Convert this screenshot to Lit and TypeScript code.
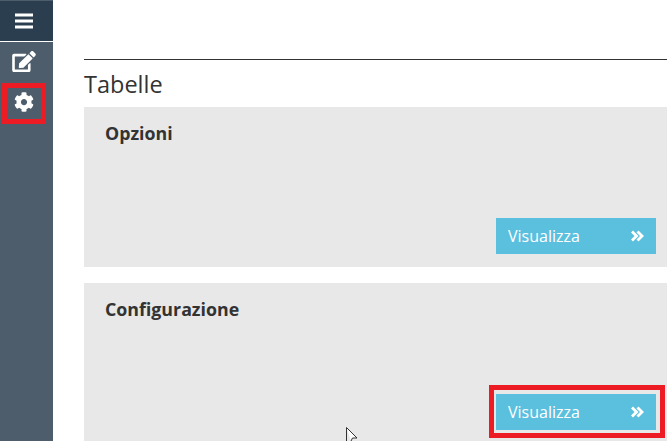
import { LitElement, html, css } from "lit";
import { customElement } from "lit/decorators.js";

const chevrons = html`<svg class="chev" viewBox="0 0 14 12" width="14" height="12" aria-hidden="true"><path d="M2 1.5 6.5 6 2 10.5M7.5 1.5 12 6 7.5 10.5" fill="none" stroke="#fff" stroke-width="2.8"/></svg>`;

@customElement("app-root")
export class AppRoot extends LitElement {
  static styles = css`
    :host {
      display: block;
      position: relative;
      width: 668px;
      height: 441px;
      overflow: hidden;
      background: #fff;
      font-family: "Open Sans", sans-serif;
      color: #333;
    }
    .page { display: flex; height: 441px; }
    .side {
      width: 53px;
      flex: none;
      background: #4e5d6c;
      display: flex;
      flex-direction: column;
      align-items: stretch;
    }
    .burger {
      height: 40px;
      margin-top: 1px;
      background: #2b3e50;
      border-bottom: 1px solid #fff;
      display: flex;
      align-items: center;
      justify-content: center;
      padding-right: 6px;
    }
    .burger svg { display: block; }
    .nav { height: 40px; display: flex; align-items: center; justify-content: center; padding-right: 6px; }
    .nav svg { display: block; }
    .nav.edit { padding-bottom: 2px; box-sizing: border-box; }
    .main { flex: 1; padding: 59px 1px 0 31px; min-width: 0; }
    hr { margin: 0; border: 0; border-top: 1px solid #333; }
    h2 {
      margin: 0;
      height: 47px;
      font-size: 23.5px;
      font-weight: 400;
      line-height: 48px;
    }
    .card {
      background: #e8e8e8;
      height: 160px;
      margin-bottom: 16px;
      padding: 14px 11px 13px 21px;
      box-sizing: border-box;
      display: flex;
      flex-direction: column;
      justify-content: space-between;
    }
    .card h3 { margin: 0; font-size: 17.8px; font-weight: 700; line-height: 25px; }
    .btn {
      align-self: flex-end;
      width: 160px;
      height: 36px;
      box-sizing: border-box;
      padding: 0 12px;
      background: #5bc0de;
      color: #fff;
      font-size: 16px;
      display: flex;
      align-items: center;
      justify-content: space-between;
    }
    .chev { display: block; }
    .mark { position: absolute; border: 5px solid #ed1c24; box-sizing: border-box; pointer-events: none; }
    .m1 { left: 2px; top: 83px; width: 44px; height: 41px; }
    .m2 { left: 489px; top: 385px; width: 176px; height: 53px; }
    .cursor { position: absolute; left: 345px; top: 427px; display: block; }
  `;

  render() {
    return html`
      <div class="page">
        <aside class="side">
          <div class="burger">
            <svg width="18" height="16" viewBox="0 0 18 16" aria-hidden="true"><path d="M0 2h18M0 8h18M0 14h18" stroke="#fff" stroke-width="3"/></svg>
          </div>
          <div class="nav edit">
            <svg width="24" height="21" viewBox="0 0 576 512" aria-hidden="true"><path fill="#fff" d="M402.6 83.2l90.2 90.2c3.8 3.8 3.8 10 0 13.8L274.4 405.6l-92.8 10.3c-12.4 1.4-22.9-9.1-21.5-21.5l10.3-92.8L388.8 83.2c3.8-3.8 10-3.8 13.8 0zm162-22.9l-48.8-48.8c-15.2-15.2-39.9-15.2-55.2 0l-35.4 35.4c-3.8 3.8-3.8 10 0 13.8l90.2 90.2c3.8 3.8 10 3.8 13.8 0l35.4-35.4c15.2-15.3 15.2-40 0-55.2zM384 346.2V454H64V134h229.8c3.2 0 6.2-1.3 8.5-3.5l40-40c7.6-7.6 2.2-20.5-8.5-20.5H48C21.5 70 0 91.5 0 118v352c0 26.5 21.5 48 48 48h352c26.5 0 48-21.5 48-48V306.2c0-10.7-12.9-16-20.5-8.5l-40 40c-2.2 2.3-3.5 5.3-3.5 8.5z"/></svg>
          </div>
          <div class="nav">
            <svg width="20" height="20" viewBox="0 0 512 512" aria-hidden="true"><path fill="#fff" d="M487.4 315.7l-42.6-24.6c4.3-23.2 4.3-47 0-70.2l42.6-24.6c4.9-2.8 7.1-8.6 5.5-14-11.1-35.6-30-67.8-54.7-94.6-3.8-4.1-10-5.1-14.8-2.3L380.8 110c-17.9-15.4-38.5-27.3-60.8-35.1V25.8c0-5.6-3.9-10.5-9.4-11.7-36.7-8.2-74.3-7.8-109.2 0-5.5 1.2-9.4 6.1-9.4 11.7V75c-22.2 7.9-42.8 19.8-60.8 35.1L88.7 85.5c-4.9-2.8-11-1.9-14.8 2.3-24.7 26.7-43.6 58.9-54.7 94.6-1.7 5.4.6 11.2 5.5 14L67.3 221c-4.3 23.2-4.3 47 0 70.2l-42.6 24.6c-4.9 2.8-7.1 8.6-5.5 14 11.1 35.6 30 67.8 54.7 94.6 3.8 4.1 10 5.1 14.8 2.3l42.6-24.6c17.9 15.4 38.5 27.3 60.8 35.1v49.2c0 5.6 3.9 10.5 9.4 11.7 36.7 8.2 74.3 7.8 109.2 0 5.5-1.2 9.4-6.1 9.4-11.7v-49.2c22.2-7.9 42.8-19.8 60.8-35.1l42.6 24.6c4.9 2.8 11 1.9 14.8-2.3 24.7-26.7 43.6-58.9 54.7-94.6 1.5-5.5-.7-11.3-5.6-14.1zM256 336c-44.1 0-80-35.9-80-80s35.9-80 80-80 80 35.9 80 80-35.9 80-80 80z"/></svg>
          </div>
        </aside>
        <main class="main">
          <hr />
          <h2>Tabelle</h2>
          <section class="card">
            <h3>Opzioni</h3>
            <div class="btn"><span>Visualizza</span>${chevrons}</div>
          </section>
          <section class="card">
            <h3>Configurazione</h3>
            <div class="btn"><span>Visualizza</span>${chevrons}</div>
          </section>
        </main>
      </div>
      <div class="mark m1"></div>
      <div class="mark m2"></div>
      <svg class="cursor" width="14" height="14" viewBox="0 0 14 14" aria-hidden="true"><path d="M1.5 .5V14M1.5 .5 12 11H7.5L6 14" fill="#fff" stroke="#333" stroke-width="1"/></svg>
    `;
  }
}
